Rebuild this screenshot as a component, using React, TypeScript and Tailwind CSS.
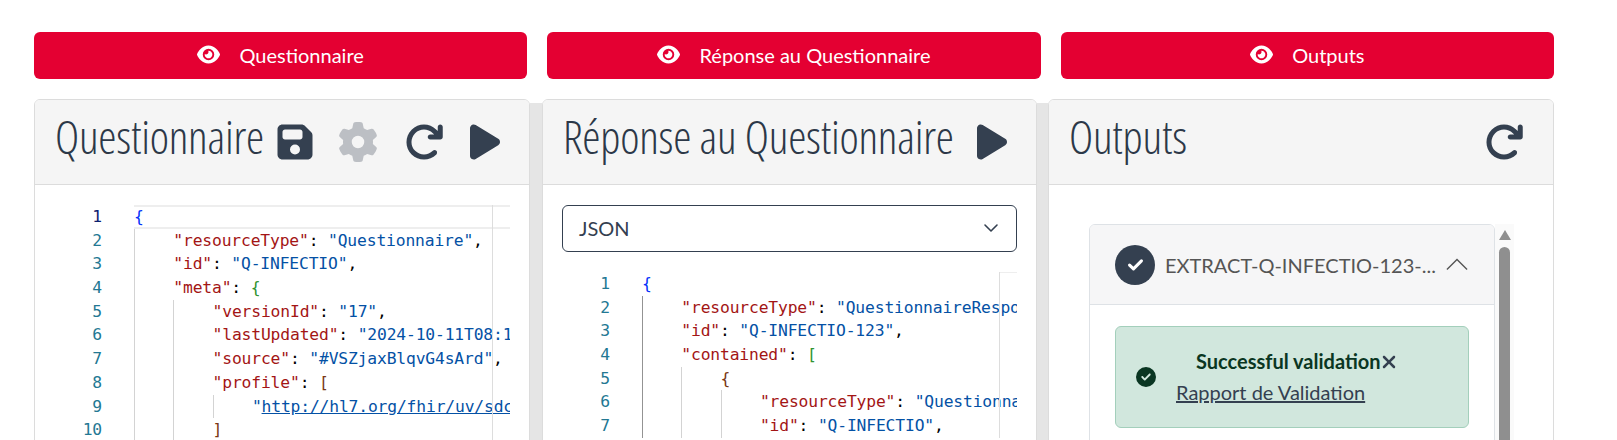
import type { ReactNode } from 'react';
import { FaArrowRotateRight, FaCircleCheck, FaEye, FaFloppyDisk, FaGear, FaPlay, FaXmark } from 'react-icons/fa6';

const KEY = 'text-[#a31515]';
const STR = 'text-[#0451a5]';
const PUN = 'text-black';

type Token = [string, string];

interface CodeLine {
  indent: number;
  tokens: Token[];
}

const prop = (key: string, value: string, tail = ','): Token[] => [
  [`"${key}"`, KEY],
  [': ', PUN],
  [`"${value}"`, STR],
  [tail, PUN],
];

const opener = (key: string, bracket: string, color: string): Token[] => [
  [`"${key}"`, KEY],
  [': ', PUN],
  [bracket, color],
];

const questionnaireLines: CodeLine[] = [
  { indent: 0, tokens: [['{', 'text-[#0431fa]']] },
  { indent: 1, tokens: prop('resourceType', 'Questionnaire') },
  { indent: 1, tokens: prop('id', 'Q-INFECTIO') },
  { indent: 1, tokens: opener('meta', '{', 'text-[#319331]') },
  { indent: 2, tokens: prop('versionId', '17') },
  { indent: 2, tokens: [['"lastUpdated"', KEY], [': ', PUN], ['"2024-10-11T08:1', STR]] },
  { indent: 2, tokens: prop('source', '#VSZjaxBlqvG4sArd') },
  { indent: 2, tokens: opener('profile', '[', 'text-[#7b3814]') },
  {
    indent: 3,
    tokens: [
      ['"', STR],
      ['http://hl7.org/fhir/uv/sdc', `${STR} underline`],
    ],
  },
  { indent: 2, tokens: [[']', 'text-[#7b3814]']] },
];

const responseLines: CodeLine[] = [
  { indent: 0, tokens: [['{', 'text-[#0431fa]']] },
  { indent: 1, tokens: [['"resourceType"', KEY], [': ', PUN], ['"QuestionnaireRespo', STR]] },
  { indent: 1, tokens: prop('id', 'Q-INFECTIO-123') },
  { indent: 1, tokens: opener('contained', '[', 'text-[#319331]') },
  { indent: 2, tokens: [['{', 'text-[#7b3814]']] },
  { indent: 3, tokens: [['"resourceType"', KEY], [': ', PUN], ['"Questionna', STR]] },
  { indent: 3, tokens: prop('id', 'Q-INFECTIO') },
];

function MainButton({ label }: { label: string }) {
  return (
    <button className="flex h-[47px] items-center justify-center gap-[19px] rounded-md bg-[#e40032] pb-[2px] text-xl text-white">
      <FaEye className="text-[23px]" />
      <span>{label}</span>
    </button>
  );
}

function PanelHeader({ title, children }: { title: string; children: ReactNode }) {
  return (
    <div className="flex h-[85px] items-center justify-between border-b border-[#dcdcdc] bg-[#f5f5f5] pl-[20px]">
      <h2 className="pb-[12px] font-['Open_Sans'] text-[46px] leading-none font-light tracking-[-0.22px] whitespace-nowrap text-[#2c3848] [font-stretch:75%]">
        {title}
      </h2>
      {children}
    </div>
  );
}

function Editor({ lines, active, darkGuide }: { lines: CodeLine[]; active?: boolean; darkGuide?: boolean }) {
  return (
    <div className="relative overflow-hidden font-['DejaVu_Sans_Mono'] text-[16.33px] tracking-[-0.16px]">
      <div className="absolute top-0 right-0 h-px w-[17px] bg-[#eeeeee]" />
      <div className="absolute top-0 right-[17px] bottom-0 z-10 w-px bg-[#dddddd]" />
      {lines.map((line, i) => (
        <div key={i} className="flex h-[23.7px] items-center leading-[23.7px]">
          <span
            className={`w-[67px] shrink-0 text-right ${active && i === 0 ? 'text-[#0b216f]' : 'text-[#237893]'}`}
          >
            {i + 1}
          </span>
          <div
            className={`ml-[32px] flex h-full min-w-0 flex-1 whitespace-pre ${
              active && i === 0 ? 'shadow-[inset_0_2px_0_#eeeeee,inset_0_-2px_0_#eeeeee]' : ''
            }`}
          >
            {Array.from({ length: line.indent }, (_, g) => (
              <span
                key={g}
                className={`h-full w-[39.3px] shrink-0 border-l ${
                  darkGuide && g === 0 ? 'border-[#939393]' : 'border-[#d3d3d3]'
                }`}
              />
            ))}
            <span>
              {line.tokens.map(([text, color], t) => (
                <span key={t} className={color}>
                  {text}
                </span>
              ))}
            </span>
          </div>
        </div>
      ))}
    </div>
  );
}

export default function App() {
  return (
    <div className="h-[440px] w-[1617px] overflow-hidden bg-white font-['Lato'] text-[#344050]">
      <div className="ml-[34px] w-[1520px] pt-8">
        <div className="grid grid-cols-3 gap-5">
          <MainButton label="Questionnaire" />
          <MainButton label="Réponse au Questionnaire" />
          <MainButton label="Outputs" />
        </div>

        <div className="mt-5 flex h-[400px]">
          <section className="w-[496px] shrink-0 overflow-hidden rounded-t-md border border-[#dcdcdc]">
            <PanelHeader title="Questionnaire">
              <div className="flex items-center pr-[24px] text-[40px]">
                <FaFloppyDisk />
                <FaGear className="ml-[23px] text-[#bcbfc4]" />
                <FaArrowRotateRight className="ml-[26px]" />
                <FaPlay className="ml-[21px]" />
              </div>
            </PanelHeader>
            <div className="pt-5 pr-[19px]">
              <Editor lines={questionnaireLines} active />
            </div>
          </section>

          <div className="mt-1 w-3 shrink-0 bg-[#e5e5e5]" />

          <section className="w-[495px] shrink-0 overflow-hidden rounded-t-md border border-[#dcdcdc]">
            <PanelHeader title="Réponse au Questionnaire">
              <FaPlay className="mr-[24px] text-[40px]" />
            </PanelHeader>
            <div className="px-[19px] pt-5">
              <div className="flex h-[47px] items-center justify-between rounded-md border border-[#344050] pr-[17px] pb-[2px] pl-[16px] text-xl">
                <span>JSON</span>
                <svg viewBox="0 0 16 16" className="h-4 w-4" fill="none" stroke="#344050" strokeWidth="1.6" strokeLinecap="round" strokeLinejoin="round">
                  <path d="m2 5 6 6 6-6" />
                </svg>
              </div>
            </div>
            <div className="pt-5 pr-[19px]">
              <Editor lines={responseLines} darkGuide />
            </div>
          </section>

          <div className="mt-1 w-[11px] shrink-0 bg-[#e5e5e5]" />

          <section className="w-[506px] shrink-0 overflow-hidden rounded-t-md border border-[#dcdcdc]">
            <PanelHeader title="Outputs">
              <FaArrowRotateRight className="mr-[29px] text-[40px]" />
            </PanelHeader>
            <div className="flex pt-[39px] pl-10">
              <div className="w-[406px] shrink-0 overflow-hidden rounded-t-md border border-[#dee2e6]">
                <div className="flex h-[80px] items-center border-b border-[#dee2e6] bg-[#f6f6f7] pl-[25px]">
                  <span className="flex h-10 w-10 items-center justify-center rounded-full bg-[#344050] text-white">
                    <svg viewBox="0 0 16 16" className="h-[19px] w-[19px]" fill="none" stroke="white" strokeWidth="2.6" strokeLinecap="round" strokeLinejoin="round">
                      <path d="m3 8.5 3.3 3.2L13 5" />
                    </svg>
                  </span>
                  <span className="ml-[10px] text-xl whitespace-nowrap text-[#555555]">EXTRACT-Q-INFECTIO-123-...</span>
                  <svg viewBox="0 0 24 24" className="ml-[10px] h-[22px] w-[22px] shrink-0" fill="none" stroke="#555555" strokeWidth="1.5">
                    <path d="m1 17 11-11 11 11" />
                  </svg>
                </div>
                <div className="px-[25px] pt-[21px]">
                  <div className="flex h-[102px] items-center rounded-md border border-[#a3cfbb] bg-[#d1e7dd] pl-5 text-xl leading-[31px]">
                    <FaCircleCheck className="shrink-0 text-[20px] text-[#0a3622]" />
                    <div className="ml-[20px]">
                      <div className="ml-[20px] flex items-center font-bold text-[#0a3622]">
                        Successful validation
                        <FaXmark className="-ml-[2px] text-[#344050]" />
                      </div>
                      <a className="underline">Rapport de Validation</a>
                    </div>
                  </div>
                </div>
              </div>
              <div className="flex w-[19px] flex-col items-center bg-[#fafafa] pt-[6px]">
                <div className="h-0 w-0 border-x-[6px] border-b-[10px] border-x-transparent border-b-[#8f8f8f]" />
                <div className="mt-[7px] h-[400px] w-[11px] rounded-full bg-[#8f8f8f]" />
              </div>
            </div>
          </section>
        </div>
      </div>
    </div>
  );
}
